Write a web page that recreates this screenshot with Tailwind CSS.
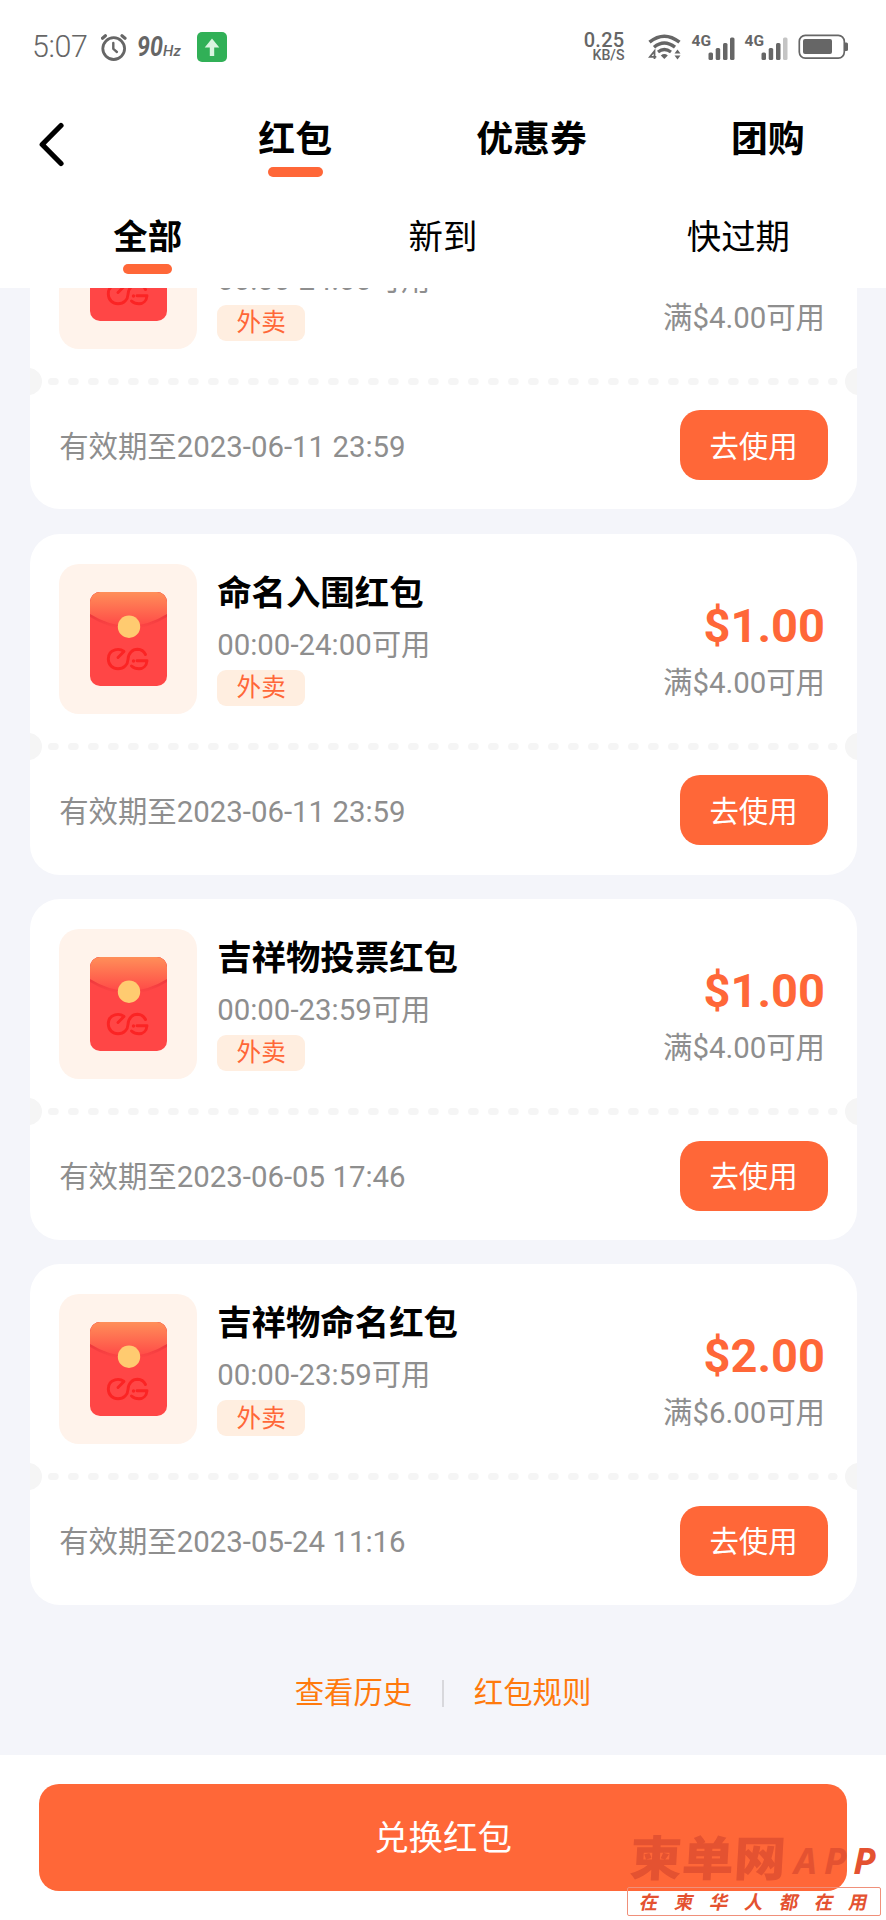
<!DOCTYPE html>
<html lang="zh-CN">
<head>
<meta charset="utf-8">
<title>红包</title>
<script src="https://cdn.jsdelivr.net/npm/@tailwindcss/browser@4"></script>
</head>
<body class="bg-white">
<div class="flex h-[1920px] w-[886px] flex-col overflow-hidden bg-white font-['Roboto','Noto_Sans_CJK_SC',sans-serif] text-black">

  <!-- Status bar -->
  <header class="flex h-[92px] shrink-0 items-center pt-0.5 text-[#666]">
    <span class="ml-[32px] w-[69px] text-[30.500px] leading-none font-light tracking-[-0.4px]">5:07</span>
    <svg class="h-[27px] w-[27px] shrink-0" viewBox="0 0 27 27" fill="none" stroke="#666" stroke-linecap="round">
      <circle cx="12.7" cy="14.6" r="10.9" stroke-width="2.8"/>
      <path d="M1.5 4.2 4.4 1.8M24 4.2 21 1.8" stroke-width="3.2"/>
      <path d="M12.3 9v5.8l3.6 3.2" stroke-width="2.4"/>
    </svg>
    <span class="ml-[9px] flex w-[60px] items-baseline leading-none font-bold italic"><span class="inline-block origin-left scale-x-[0.86] text-[27px]">90</span><span class="-ml-1 text-[15px] font-medium">Hz</span></span>
    <svg class="h-[30px] w-[30px] shrink-0" viewBox="0 0 30 30">
      <rect width="30" height="30" rx="5" fill="#31b057"/>
      <path d="M15 6.5 22.3 15.500H17.200V24H12.800V15.500H7.700Z" fill="#d9f5e0"/>
    </svg>
    <div class="ml-auto flex w-[48px] flex-col items-end leading-none font-medium">
      <span class="text-[20px] leading-[17px] tracking-[0.3px]">0.25</span>
      <span class="text-[14.200px] leading-[13px]">KB/S</span>
    </div>
    <svg class="ml-[23px] h-[28px] w-[34px] shrink-0" viewBox="647 31 34 28" fill="none" stroke="#666">
      <path d="M648.500 40.200q14.700-12 30 0" stroke-width="3.500"/>
      <path d="M653 45.200q10.200-8.400 21 0" stroke-width="3.400"/>
      <path d="M657 50q6.200-5 13 0" stroke-width="3.200"/>
      <path d="m663.300 57-3.500-3.600q3.500-2.800 7 0Z" fill="#666" stroke="none"/>
      <path d="M653.500 57V49l-4.600 5.800h6.400" stroke-width="1.800"/>
      <path d="m676.500 47.500 3 4h-6zM676.500 57.500l3-4h-6z" fill="#666" stroke="none"/>
    </svg>
    <div class="ml-[10px] flex h-[28px] w-[44px]">
      <span class="text-[15.500px] leading-[16px] font-bold">4G</span>
      <svg class="-ml-[3px] h-[28px] w-[28px] shrink-0" viewBox="0 0 28 28" fill="#666"><rect x="0.500" y="19.500" width="4.500" height="7.500" rx="1.500"/><rect x="7.700" y="15" width="4.500" height="12" rx="1.500"/><rect x="15" y="10" width="4.500" height="17" rx="1.500"/><rect x="22" y="4.500" width="4.500" height="22.500" rx="1.500"/></svg>
    </div>
    <div class="ml-[9px] flex h-[28px] w-[44px]">
      <span class="text-[15.500px] leading-[16px] font-bold">4G</span>
      <svg class="-ml-[3px] h-[28px] w-[28px] shrink-0" viewBox="0 0 28 28" fill="#666"><rect x="0.500" y="19.500" width="4.500" height="7.500" rx="1.500"/><rect x="7.700" y="15" width="4.500" height="12" rx="1.500"/><rect x="15" y="10" width="4.500" height="17" rx="1.500"/><rect x="22" y="4.500" width="4.500" height="22.500" rx="1.500" fill="#c4c4c4"/></svg>
    </div>
    <svg class="mr-[37.500px] ml-[9px] h-[26px] w-[51px] shrink-0" viewBox="0 0 51 26">
      <rect x="1.300" y="1.300" width="45" height="22.800" rx="6" fill="none" stroke="#666" stroke-width="1.700"/>
      <path d="M47 8.500h1.500q1.500 0 1.500 1.500v5.500q0 1.500-1.500 1.500H47z" fill="#666"/>
      <rect x="5" y="5" width="29" height="15" rx="2" fill="#666"/>
    </svg>
  </header>

  <!-- Primary tabs -->
  <nav class="flex h-[106px] shrink-0">
    <button class="flex w-[177px] items-start pt-[30px] pl-[38px]">
      <svg class="h-[46px] w-[28px]" viewBox="0 0 28 46" fill="none" stroke="#000" stroke-width="5.200" stroke-linecap="round" stroke-linejoin="round"><path d="M23 3.500 4.200 22.500 23 41.500"/></svg>
    </button>
    <div class="grid flex-1 grid-cols-3 text-[36.900px] leading-[54px] font-bold">
      <div class="flex flex-col items-center pt-[21px]"><span>红包</span><i class="h-[10px] w-[55px] rounded-full bg-[#ff6738]"></i></div>
      <div class="flex flex-col items-center pt-[21px]"><span>优惠券</span></div>
      <div class="flex flex-col items-center pt-[21px]"><span>团购</span></div>
    </div>
  </nav>

  <!-- Filter tabs -->
  <nav class="grid h-[90px] shrink-0 grid-cols-3 text-[34.400px] leading-[50px]">
    <div class="flex flex-col items-center pt-[14px]"><span class="font-bold">全部</span><i class="mt-[2px] h-[10px] w-[49px] rounded-full bg-[#ff6738]"></i></div>
    <div class="flex flex-col items-center pt-[14px]"><span>新到</span></div>
    <div class="flex flex-col items-center pt-[14px]"><span>快过期</span></div>
  </nav>

  <!-- Coupon list, scrolled to its end -->
  <main class="flex h-[1467px] shrink-0 flex-col justify-end overflow-hidden bg-[#f4f5fa]">
    <div id="list" class="flex flex-col gap-[24.500px] pr-[29px] pl-[29.600px]"></div>
    <div class="flex h-[150px] shrink-0 items-center justify-center gap-[30px] pt-[26px] text-[29.400px] leading-[44px] text-[#ff7a0d]">
      <span>查看历史</span><i class="h-[27px] w-[1.500px] bg-[#d8d8dc]"></i><span>红包规则</span>
    </div>
  </main>

  <!-- Redeem bar with the site mark over its corner -->
  <footer class="relative h-[165px] shrink-0 bg-white px-[39.400px] pt-[29px]">
    <button class="flex h-[107px] w-full items-center justify-center rounded-[20px] bg-[#ff6738] pt-0.5 text-[34.400px] text-white">兑换红包</button>
    <div class="absolute top-[76px] left-[627px] w-[254px] text-[#e45231]">
      <div class="flex h-[56px] items-center pl-[3px] whitespace-nowrap">
        <span class="mt-[2px] inline-block shrink-0 -skew-x-3 scale-y-[0.92] text-[52px] leading-[56px] font-black">柬单网</span>
        <span class="mt-[2px] ml-[8px] font-['Open_Sans'] text-[36.500px] leading-none font-bold tracking-[7px] italic">APP</span>
      </div>
      <div class="flex h-[29px] items-center justify-between rounded-[2px] border border-[#f0907a] px-[12px] pt-[3px] text-[18.500px] leading-none font-bold">
        <span class="inline-block -skew-x-12">在</span><span class="inline-block -skew-x-12">柬</span><span class="inline-block -skew-x-12">华</span><span class="inline-block -skew-x-12">人</span><span class="inline-block -skew-x-12">都</span><span class="inline-block -skew-x-12">在</span><span class="inline-block -skew-x-12">用</span>
      </div>
    </div>
  </footer>
</div>

<svg width="0" height="0" class="absolute">
  <defs>
    <linearGradient id="flap" x1="0" y1="0" x2="0" y2="1"><stop offset="0" stop-color="#ff8f59"/><stop offset="1" stop-color="#ff4a47"/></linearGradient>
    <linearGradient id="shade" x1="0" y1="0" x2="0" y2="1"><stop offset="0.600" stop-color="#ee393c"/><stop offset="1" stop-color="#ff4646"/></linearGradient>
    <clipPath id="body"><rect width="77" height="94" rx="10"/></clipPath>
  </defs>
  <symbol id="envelope" viewBox="0 0 77 94">
    <g clip-path="url(#body)">
      <rect width="77" height="94" fill="#ff4646"/>
      <path d="M0 0H77V25Q38.500 49 0 25Z" fill="url(#shade)"/>
      <path d="M0 0H77V22Q38.500 46 0 22Z" fill="url(#flap)"/>
    </g>
    <circle cx="39" cy="34.700" r="11.200" fill="#ffcb70"/>
    <g fill="none" stroke="#fb2424" stroke-width="2.900" stroke-linecap="round" stroke-linejoin="round">
      <path d="M28 65.500 34 59.500C31.500 57.500 28 57 25 57.800C20.500 59 18.300 63 18.300 67C18.300 73 22.800 76.800 28 76.800C34 76.800 37.800 72.500 38 67.500C38.300 61 42.500 57.300 47.500 57.300Q53 57.500 55.500 62.500"/>
      <path d="M47 68.800H57C56.500 73.500 53.500 76.800 49 76.800Q44.500 76.800 41.500 74"/>
    </g>
    <circle cx="43.500" cy="69" r="1.700" fill="#fb2424"/>
  </symbol>
</svg>

<script>
const coupons = [
  ["命名入围红包", "00:00-24:00可用", "$1.00", "满$4.00可用", "2023-06-11 23:59"],
  ["命名入围红包", "00:00-24:00可用", "$1.00", "满$4.00可用", "2023-06-11 23:59"],
  ["吉祥物投票红包", "00:00-23:59可用", "$1.00", "满$4.00可用", "2023-06-05 17:46"],
  ["吉祥物命名红包", "00:00-23:59可用", "$2.00", "满$6.00可用", "2023-05-24 11:16"],
];
const dashes = Array.from({length: 40}, (_, i) => `<rect x="${(i * 20).toFixed(1)}" width="${i === 39 ? 9.5 : 10.7}" height="7" rx="3.5"/>`).join("");
document.getElementById("list").innerHTML = coupons.map(([title, time, price, rule, until]) => `
<article class="h-[340.700px] shrink-0 overflow-hidden rounded-[30px] bg-white">
  <div class="flex h-[199px] pt-[30px] pr-[32px] pl-[29.600px]">
    <div class="flex h-[150px] w-[138px] shrink-0 items-center justify-center rounded-[20px] bg-[#fff3eb]">
      <svg class="h-[94px] w-[77px]"><use href="#envelope"/></svg>
    </div>
    <div class="ml-[20px] flex flex-1 flex-col items-start">
      <h2 class="mt-[4px] text-[34.400px] leading-[50px] font-bold whitespace-nowrap">${title}</h2>
      <p class="mt-[4px] text-[29.400px] leading-[46px] whitespace-nowrap text-[#8e8e8e]">${time}</p>
      <span class="mt-[2px] flex h-[36px] w-[88px] items-center justify-center rounded-[9px] bg-[#ffeee0] pt-px text-[24.600px] leading-none text-[#ff6738]">外卖</span>
    </div>
    <div class="flex flex-col items-end">
      <b class="mt-[33px] text-[47px] leading-[57px] text-[#ff6738]">${price}</b>
      <span class="mt-[7px] text-[29.400px] leading-[44px] text-[#8e8e8e]">${rule}</span>
    </div>
  </div>
  <div class="-mx-[14.500px] flex h-[27px] items-center justify-between">
    <i class="h-[27px] w-[27px] rounded-full bg-[#f5f5f5]"></i>
    <svg class="h-[7px] w-[790px] shrink-0" fill="#f5f5f5">${dashes}</svg>
    <i class="h-[27px] w-[27px] rounded-full bg-[#f5f5f5]"></i>
  </div>
  <div class="flex items-center justify-between pt-[15.500px] pr-[29.500px] pl-[29.600px]">
    <span class="pt-[3px] text-[29.400px] leading-[44px] text-[#8e8e8e]">有效期至${until}</span>
    <button class="h-[70px] w-[148px] rounded-[20px] bg-[#ff6738] pt-[3px] text-[29.400px] text-white">去使用</button>
  </div>
</article>`).join("");
</script>
</body>
</html>
